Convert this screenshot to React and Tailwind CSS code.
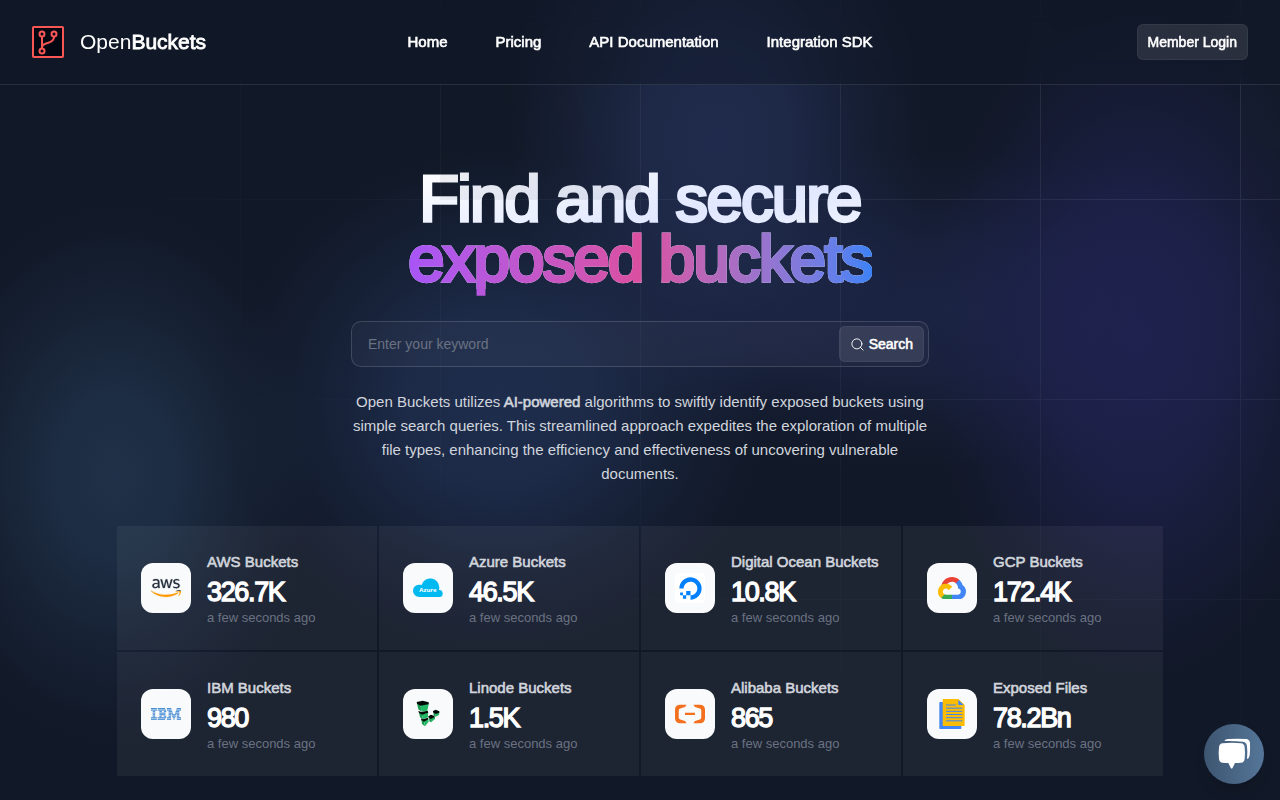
import React from "react";
import { Search } from "lucide-react";
import { FaAws, FaDigitalOcean } from "react-icons/fa";

const EMBOLDEN = "font-normal [-webkit-text-stroke-width:0.04em]";

function BrandMark() {
  return (
    <svg viewBox="0 0 96 96" className="size-8" fill="none" stroke="#f95656" aria-hidden="true">
      <rect x="3" y="3" width="90" height="90" rx="2" fill="#030712" strokeWidth="6" />
      <g strokeWidth="6">
        <circle cx="30" cy="24" r="7.5" />
        <circle cx="66" cy="24" r="7.5" />
        <circle cx="30" cy="75" r="7.5" />
        <path d="M30 32v35M66 32c0 11-6 15-17 18-13 3-18 6-19 13" />
      </g>
    </svg>
  );
}

function AwsLogo() {
  return (
    <>
      <svg width="0" height="0" className="absolute" aria-hidden="true">
        <linearGradient id="aws-fill" gradientUnits="userSpaceOnUse" x1="0" y1="0" x2="0" y2="512">
          <stop offset="0.61" stopColor="#252f3e" />
          <stop offset="0.61" stopColor="#f90" />
        </linearGradient>
      </svg>
      <FaAws className="h-6 w-[30px] fill-[url(#aws-fill)] stroke-[url(#aws-fill)] stroke-4" />
    </>
  );
}

function AzureLogo() {
  return (
    <svg viewBox="0 0 90 90" className="size-[30px]" fill="#00b9f1" aria-hidden="true">
      <path d="M19 72a18.500 18.500 0 0 1-1-37c3 0 6 .5 8 1a27 27 0 0 1 53 8c0 3-1 5-1 7a10.500 10.500 0 0 1 1 21z" />
      <text x="45" y="57" textAnchor="middle" fill="#fff" fontSize="18" fontWeight="700" fontFamily="Open Sans, sans-serif">
        Azure
      </text>
    </svg>
  );
}

function DigitalOceanLogo() {
  return (
    <span className="flex size-[30px] items-center justify-center rounded bg-white">
      <FaDigitalOcean className="size-[23px] text-[#0080ff]" />
    </span>
  );
}

function GoogleCloudLogo() {
  return (
    <svg viewBox="0 0 256 206" className="w-7" aria-hidden="true">
      <path fill="#ea4335" d="M170.300 56.800l22.200-22.200 1.500-9.400C153.400-11.700 89-7.500 52.400 33.900 42.300 45.400 34.700 59.800 30.700 74.600l8-1.100 44.500-7.400 3.400-3.500c19.800-21.700 53.300-24.700 76.100-6.200z" />
      <path fill="#4285f4" d="M224.200 73.900c-5.100-18.800-15.600-35.700-30.200-48.700l-31.200 31.200c13.200 10.800 20.700 27 20.300 44.100v5.500a27.800 27.800 0 0 1 0 55.300h-55.600l-5.500 5.900v33.400l5.500 5.200h55.600c40 .3 72.600-31.500 72.900-71.400.2-24.200-11.700-46.900-31.800-60.500" />
      <path fill="#34a853" d="M71.900 205.800h55.600v-44.500H71.900c-4 0-7.900-.9-11.500-2.500l-7.800 2.400-22.400 22.300-2 7.600c12.600 9.500 27.900 14.800 43.700 14.700" />
      <path fill="#fbbc05" d="M71.900 61.400A72.300 72.300 0 0 0 28.200 191l32.300-32.200a27.800 27.800 0 1 1 36.800-36.800l32.200-32.200a72.300 72.300 0 0 0-57.600-28.400" />
    </svg>
  );
}

const IBM_ROWS = [
  [[0, 19.5], [22.3, 47], [53, 67.5], [85.5, 100]],
  [[0, 19.5], [22.3, 50], [53, 69.2], [83.8, 100]],
  [[5.6, 14], [27.9, 36.2], [43, 51], [58.6, 71], [82, 94.4]],
  [[5.6, 14], [27.9, 48], [58.6, 73], [80, 94.4]],
  [[5.6, 14], [27.9, 48], [58.6, 67], [68.5, 84.5], [86, 94.4]],
  [[5.6, 14], [27.9, 36.2], [43, 51], [58.6, 67], [70.5, 82.5], [86, 94.4]],
  [[0, 19.5], [22.3, 50], [53, 67], [72.5, 80.5], [86, 100]],
  [[0, 19.5], [22.3, 47], [53, 67], [75, 78], [86, 100]],
];

function IbmLogo() {
  return (
    <svg viewBox="0 0 100 40" className="h-3 w-[30px]" fill="#4a8fd4" aria-hidden="true">
      {IBM_ROWS.map((row, r) =>
        row.map(([from, to]) => (
          <rect key={`${r}-${from}`} x={from} y={r * 5.1} width={to - from} height="3.9" />
        ))
      )}
    </svg>
  );
}

function LinodeLogo() {
  return (
    <svg viewBox="0 0 90 90" className="size-[30px]" aria-hidden="true">
      <g fill="#1a9e52">
        <path d="M12 13l10 5 4 20-10-7z" />
        <path d="M18 41l8 5 4 15-9-6z" />
        <path d="M25 61l8 5 3 16-9-7z" />
        <path d="M48 55l6 3v12l-5-3z" />
        <path d="M61 39l7 4v10l-6-3z" />
      </g>
      <g fill="#22b866">
        <path d="M22 18l25-4-4 21-17 3z" />
        <path d="M26 46l19-5v14l-15 6z" />
        <path d="M33 66l13-7 1 9-11 14z" />
        <path d="M54 58l12-5v7L54 70z" />
        <path d="M68 43l11-3-1 8-10 5z" />
      </g>
      <g fill="#020a06">
        <path d="M11 9l18-4 18 5v6l-25 4-10-6z" />
        <path d="M16 36l10 3 18-4 2 6-19 6-9-5z" />
        <path d="M24 58l6 3 15-5 1 5-13 7-8-5z" />
        <path d="M46 52l8-5 8 3 4 4-12 6-7-4z" />
        <path d="M60 36l8-4 11 5v4l-11 4-8-5z" />
      </g>
    </svg>
  );
}

function AlibabaLogo() {
  return (
    <svg viewBox="0 0 24 24" className="size-[30px]" fill="#f3701f" aria-hidden="true">
      <path d="M3.996 4.517h5.291L8.010 6.324 4.153 7.506a1.668 1.668 0 0 0-1.165 1.601v5.786a1.668 1.668 0 0 0 1.165 1.600l3.857 1.183 1.277 1.807H3.996A3.996 3.996 0 0 1 0 15.487V8.513a3.996 3.996 0 0 1 3.996-3.996m16.008 0h-5.291l1.277 1.807 3.857 1.182c.715.227 1.170.889 1.165 1.601v5.786a1.668 1.668 0 0 1-1.165 1.600l-3.857 1.183-1.277 1.807h5.291A3.996 3.996 0 0 0 24 15.487V8.513a3.996 3.996 0 0 0-3.996-3.996m-4.007 8.345H8.002v-1.804h7.995Z" />
    </svg>
  );
}

function FilesLogo() {
  return (
    <svg viewBox="0 0 90 90" className="size-[30px]" aria-hidden="true">
      <path fill="#4285f4" d="M9 9h12v68h52v11a2 2 0 0 1-2 2H9a2 2 0 0 1-2-2V11a2 2 0 0 1 2-2z" />
      <path fill="#fbbc05" d="M19 0h45l19 18v61a2 2 0 0 1-2 2H19a2 2 0 0 1-2-2V2a2 2 0 0 1 2-2z" />
      <path fill="#4285f4" d="M64 3l16 15H66a2 2 0 0 1-2-2z" />
      <path stroke="#4285f4" strokeWidth="3" d="M27 18h30M27 27.500h49M27 37h49M27 46.500h49M27 56h49M27 65.500h49" />
    </svg>
  );
}

function ChatIcon() {
  return (
    <svg viewBox="0 0 180 180" className="size-full" fill="#fff" aria-hidden="true">
      <path d="M56 58q28-3 55 0 10 1 11 12 2 17 0 34-1 11-11 12-9 1-18 1l-7 14q-3 5-6 0l-7-14q-9 0-17-1-10-1-11-12-2-17 0-34 1-11 11-12z" />
      <path d="M61 51q3-6 11-6 28-2 54 0 11 1 12 12 1 20-1 37-1 8-8 11 2-22 0-38-1-12-12-14-27-3-56-2z" />
    </svg>
  );
}

const STATS = [
  { name: "AWS Buckets", value: "326.7K", Logo: AwsLogo },
  { name: "Azure Buckets", value: "46.5K", Logo: AzureLogo },
  { name: "Digital Ocean Buckets", value: "10.8K", Logo: DigitalOceanLogo },
  { name: "GCP Buckets", value: "172.4K", Logo: GoogleCloudLogo },
  { name: "IBM Buckets", value: "980", Logo: IbmLogo },
  { name: "Linode Buckets", value: "1.5K", Logo: LinodeLogo },
  { name: "Alibaba Buckets", value: "865", Logo: AlibabaLogo },
  { name: "Exposed Files", value: "78.2Bn", Logo: FilesLogo },
];

function GridPattern() {
  return (
    <svg
      aria-hidden="true"
      className="pointer-events-none absolute inset-0 size-full stroke-white/10 [mask-image:radial-gradient(100%_100%_at_top_right,white,transparent)]"
    >
      <defs>
        <pattern id="grid" width="200" height="200" x="50%" y="-1" patternUnits="userSpaceOnUse">
          <path d="M.5 200V.5H200" fill="none" />
        </pattern>
      </defs>
      <svg x="50%" y="-1" className="overflow-visible fill-gray-800/20">
        <path
          d="M-200 0h201v201h-201Z M600 0h201v201h-201Z M-400 600h201v201h-201Z M200 800h201v201h-201Z"
          strokeWidth="0"
        />
      </svg>
      <rect width="100%" height="100%" strokeWidth="0" fill="url(#grid)" />
    </svg>
  );
}

function Header() {
  return (
    <header className="relative z-10 border-b border-white/10 bg-gray-900/50 backdrop-blur-md">
      <div className="flex h-[84px] items-center justify-between px-8">
        <div className="flex flex-1">
          <a href="#home" className="flex items-center gap-4 text-[21px] leading-7">
            <BrandMark />
            <span>
              Open<strong className={EMBOLDEN}>Buckets</strong>
            </span>
          </a>
        </div>
        <nav className={`flex gap-12 text-[15px] ${EMBOLDEN}`}>
          <a href="#home">Home</a>
          <a href="#pricing">Pricing</a>
          <a href="#api">API Documentation</a>
          <a href="#sdk">Integration SDK</a>
        </nav>
        <div className="flex flex-1 justify-end">
          <button
            type="button"
            className={`h-9 rounded-md border border-white/5 bg-white/10 px-2.5 text-sm ${EMBOLDEN}`}
          >
            Member Login
          </button>
        </div>
      </div>
    </header>
  );
}

function StatCard({ name, value, Logo }) {
  return (
    <div className="flex items-center gap-4 bg-white/5 px-6 py-[22px]">
      <div className="flex size-[50px] shrink-0 items-center justify-center rounded-xl bg-gray-50">
        <Logo />
      </div>
      <div className="whitespace-nowrap">
        <p className={`text-[15px] leading-7 text-gray-300 ${EMBOLDEN}`}>{name}</p>
        <p className="text-[27px] leading-8 font-normal tracking-tighter [-webkit-text-stroke-width:0.05em]">{value}</p>
        <p className="text-[13px] leading-5 text-gray-500">a few seconds ago</p>
      </div>
    </div>
  );
}

export default function App() {
  return (
    <div className="relative min-h-screen overflow-hidden bg-[#111827] bg-[radial-gradient(ellipse_200px_270px_at_9%_475px,#20324af0_0%,#20324ac8_30%,#20324a60_62%,#20324a00_100%),radial-gradient(ellipse_210px_270px_at_56%_140px,#222e52e0_0%,#222e52c0_35%,#222e5258_65%,#222e5200_100%),radial-gradient(ellipse_270px_250px_at_39%_400px,#203052e0_0%,#203052c0_35%,#20305258_65%,#20305200_100%),radial-gradient(ellipse_210px_340px_at_89%_340px,#1f224ff0_0%,#1f224fc8_38%,#1f224f60_68%,#1f224f00_100%),radial-gradient(ellipse_420px_160px_at_72%_310px,#1e274cc0_0%,#1e274c90_40%,#1e274c40_70%,#1e274c00_100%)] font-['Liberation_Sans',Arial,sans-serif] text-white">
      <Header />
      <main className="px-6 pt-[84px] pb-6">
        <section className="mx-auto flex max-w-[578px] flex-col items-center text-center">
          <h1 className="bg-linear-to-br from-white via-indigo-100 to-white bg-clip-text text-[65px] leading-[60px] font-normal tracking-tight text-transparent [-webkit-text-stroke-width:0.05em]">
            Find and secure
            <span className="-mb-3 block bg-linear-to-r from-[#a855f7] via-[#db4fa0] to-[#3b82f6] bg-clip-text pb-3">
              exposed buckets
            </span>
          </h1>
          <form
            className="mt-8 flex w-full items-center rounded-[10px] border border-white/15 bg-white/[0.03] p-1"
            onSubmit={(event) => event.preventDefault()}
          >
            <input
              type="text"
              aria-label="Keyword"
              placeholder="Enter your keyword"
              className="min-w-0 flex-1 bg-transparent px-3 text-sm outline-none placeholder:text-gray-500"
            />
            <button
              type="submit"
              className={`flex h-9 items-center gap-1 rounded-md border border-white/5 bg-white/10 px-2.5 text-sm ${EMBOLDEN}`}
            >
              <Search size={15} strokeWidth={1.5} aria-hidden="true" />
              Search
            </button>
          </form>
          <p className="mt-[23px] text-[15px] leading-6 text-gray-300">
            Open Buckets utilizes <strong className={EMBOLDEN}>AI-powered</strong> algorithms to swiftly identify
            exposed buckets using simple search queries. This streamlined approach expedites the exploration of multiple
            file types, enhancing the efficiency and effectiveness of uncovering vulnerable documents.
          </p>
        </section>
        <section className="mx-auto mt-10 grid max-w-[1046px] grid-cols-4 gap-0.5">
          {STATS.map((stat) => (
            <StatCard key={stat.name} {...stat} />
          ))}
        </section>
      </main>
      <GridPattern />
      <button
        type="button"
        aria-label="Open chat"
        className="fixed right-4 bottom-4 z-20 size-[60px] rounded-full bg-linear-to-r from-[#3d5570] to-[#557699] shadow-lg"
      >
        <ChatIcon />
      </button>
    </div>
  );
}
